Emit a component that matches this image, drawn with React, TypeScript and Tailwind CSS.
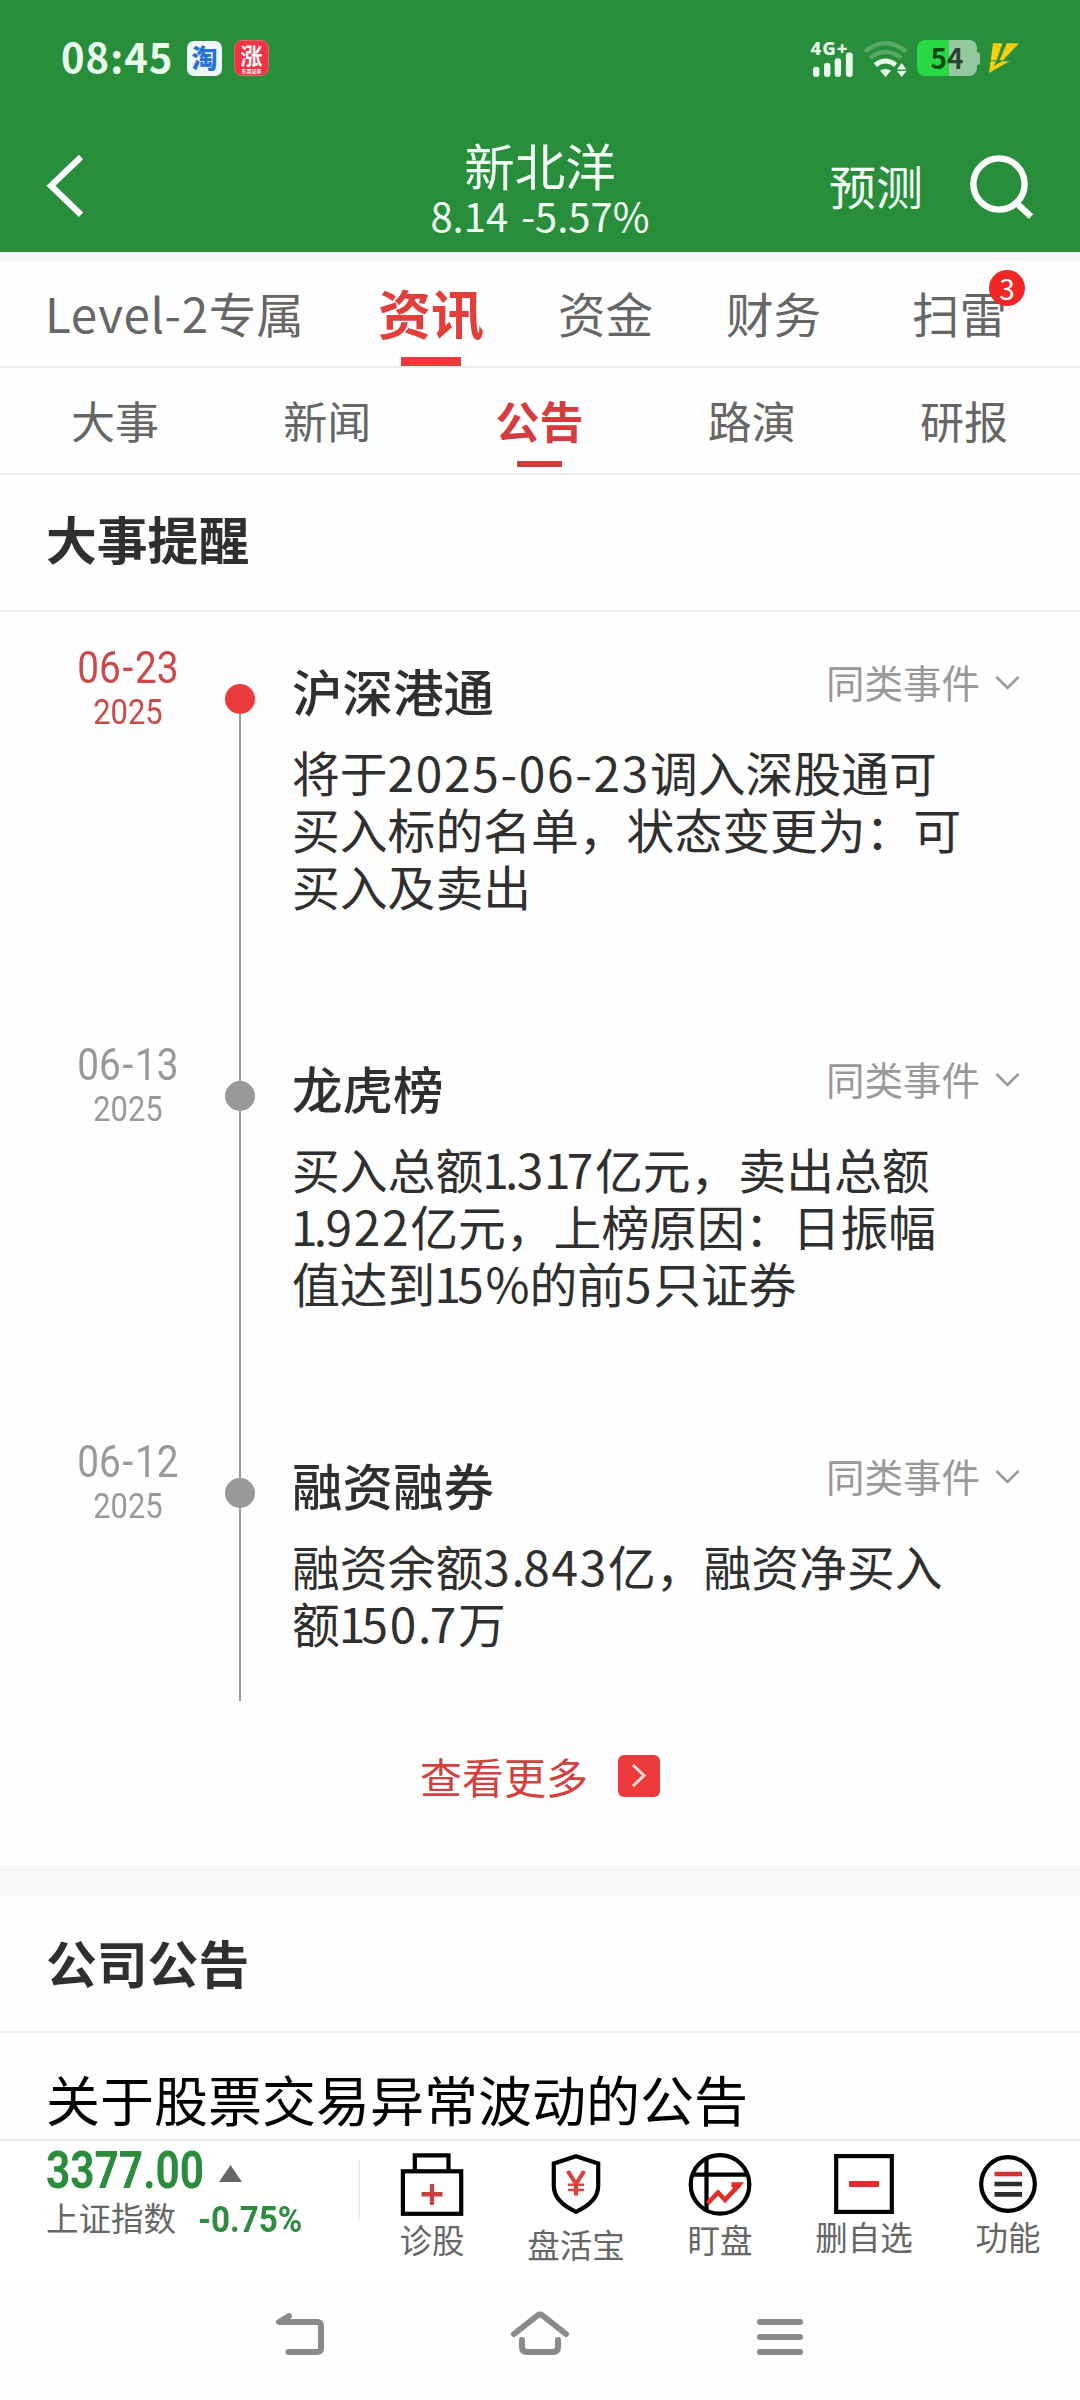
import type { ReactNode } from 'react'

type TimelineEvent = {
  date:   string
  title:  string
  lines:  string[]
  active: boolean
}

const EVENTS: TimelineEvent[] = [
  {
    date: '06-23',
    title: '沪深港通',
    lines: ['将于2025-06-23调入深股通可', '买入标的名单，状态变更为：可', '买入及卖出'],
    active: true,
  },
  {
    date: '06-13',
    title: '龙虎榜',
    lines: ['买入总额1.317亿元，卖出总额', '1.922亿元，上榜原因：日振幅', '值达到15%的前5只证券'],
    active: false,
  },
  {
    date: '06-12',
    title: '融资融券',
    lines: ['融资余额3.843亿，融资净买入', '额150.7万'],
    active: false,
  },
]

const SUB_TABS = ['大事', '新闻', '公告', '路演', '研报']

// Proportional figures: loosen round digits, pull in "1" and the decimal point
function Mixed({ text }: { text: string }) {
  return (
    <>
      {text.split(/(1|\.|[02-9-]+)/).map((part, i) => {
        if (i % 2 === 0) return part
        if (part === '1') return <span key={i} className="-ml-[1px] tracking-[-3.8px]">1</span>
        if (part === '.') return <span key={i} className="tracking-[-1.5px]">.</span>
        return <span key={i} className="tracking-[1.7px]">{part}</span>
      })}
    </>
  )
}

function StatusBar() {
  return (
    <div className="flex h-[116px] items-center pl-[61px] pr-[60px]">
      <span className="-mt-[5px] w-[126px] text-[40px] leading-[48px] font-bold tracking-[1px] text-[#e9fbea]">08:45</span>
      <span className="flex h-[35px] w-[35px] items-center justify-center rounded-[7px] bg-[#f0f7fb] text-[26px] leading-[35px] font-black text-[#2672d2]">
        <span className="-mt-[3px]">淘</span>
      </span>
      <span className="ml-[12px] flex h-[36px] w-[35px] flex-col items-center rounded-[8px] border border-[#e0656a] bg-[#f23345] text-white">
        <span className="text-[22px] leading-[27px] font-bold">涨</span>
        <span className="-mt-[1px] text-[5px] leading-[7px] font-bold">东莞证券</span>
      </span>

      <div className="ml-auto flex items-center">
        <svg width="44" height="40" viewBox="811 38 44 40">
          <text x="811.5" y="55" fontSize="18.5" fontWeight="800" fill="#e9fbea" textLength="37" className="font-['Noto_Sans']">4G+</text>
          <g fill="#e9fbea">
            <rect x="814" y="66.7" width="6.4" height="10.3" rx="3" />
            <rect x="825" y="62.7" width="6.4" height="14.3" rx="3" />
            <rect x="835.7" y="58.3" width="6.4" height="18.7" rx="3" />
            <rect x="846.9" y="52.5" width="6.8" height="24.5" rx="3" />
          </g>
        </svg>
        <svg className="ml-[9px]" width="46" height="40" viewBox="864 38 46 40" fill="none">
          <path d="M866 51.5 Q886.5 35 907 51.5" stroke="#56a966" strokeWidth="4.6" />
          <path d="M871 58 Q886.5 46 902 58" stroke="#56a966" strokeWidth="4.6" />
          <path d="M876.3 65 Q886.5 57 896.7 65" stroke="#e9fbea" strokeWidth="4.8" />
          <path d="M881 70.5 Q886.5 67.5 892 70.5 L886.5 77Z" fill="#e9fbea" />
          <path d="M898 69.5 L902.7 63 L907.5 69.5Z M898 71 H907.5 L902.7 77Z" fill="#e9fbea" />
        </svg>
        <div className="ml-[8px] flex h-[36px] w-[60px] items-center justify-center rounded-[8px] bg-linear-to-r from-[#29d845] from-[53%] to-[#94c9a0] to-[53%]">
          <span className="-mt-[2px] bg-linear-to-r from-[#004a0c] from-55% to-[#2b4031] to-55% bg-clip-text text-[28px] leading-[36px] font-bold text-transparent">54</span>
        </div>
        <span className="h-[13px] w-[3px] rounded-r-[3px] bg-[#94c9a0]" />
        <svg className="ml-[8px]" width="32" height="32" viewBox="989 42 32 32" fill="#f3cf10">
          <path d="M994 43.3 H1003.5 L997.5 60.3 H991.8Z" />
          <path d="M1007.8 43.3 H1019.8 L1004 60.3 H1000.5Z" />
          <path d="M991.5 61.3 H997 L995 66 L1003 61.3 H1010.5 L990 73Z" />
        </svg>
      </div>
    </div>
  )
}

function Header() {
  return (
    <div className="flex h-[136px] items-start justify-between">
      <div className="w-[340px] pt-[38px] pl-[44px]">
        <svg width="42" height="64" viewBox="44 154 42 64" fill="none" stroke="#fff" strokeWidth="6.2">
          <path d="M81 157 L51 185.8 L81 214.8" />
        </svg>
      </div>
      <div className="flex flex-col items-center pt-[20px] text-[#f2fff4]">
        <div className="text-[50.5px] leading-[56px]">新北洋</div>
        <div className="mt-px text-[40px] leading-[44px]">8.14<span className="pl-[4px]"> </span>-5.57%</div>
      </div>
      <div className="flex w-[340px] items-start pt-[39px] pl-[89px]">
        <span className="text-[47px] leading-[60px] text-[#f2fff4]">预测</span>
        <svg className="ml-[43px]" width="70" height="66" viewBox="966 154 70 66" fill="none" stroke="#fff" strokeWidth="6.4">
          <circle cx="999" cy="183" r="25.6" />
          <path d="M1016.5 202 L1031 215.5" />
        </svg>
      </div>
    </div>
  )
}

function MainTabs() {
  return (
    <div className="flex h-[107px] items-start border-b-2 border-[#ececec] pl-[45px] text-[47.5px] leading-[60px] text-[#666]">
      <div className="w-[259px] pt-[22px]"><span className="tracking-[0.7px]">Level-2</span>专属</div>
      <div className="w-[254px]">
        <div className="flex w-[254px] flex-col items-center">
          <span className="flex h-[96px] items-center pt-[5px] text-[53px] font-bold text-[#e23e3c]">资讯</span>
          <span className="h-[9px] w-[60px] bg-[#ea3c3b]" />
        </div>
      </div>
      <div className="w-[168px] pt-[22px]">资金</div>
      <div className="w-[186px] pt-[22px]">财务</div>
      <div className="relative pt-[22px]">
        扫雷
        <span className="absolute top-[9px] left-[77px] flex h-[36px] w-[36px] items-center justify-center rounded-full bg-[#f12626] text-[28px] leading-[36px] text-white">3</span>
      </div>
    </div>
  )
}

function SubTabs() {
  return (
    <div className="grid h-[107px] grid-cols-5 border-b-2 border-[#ececec] pr-[10px] pl-[9px] text-[44px] leading-[56px] text-[#666]">
      {SUB_TABS.map(tab => (
        <div key={tab} className="flex flex-col items-center pt-[24px]">
          {tab === '公告' ? (
            <>
              <span className="font-bold text-[#d43c3d]">{tab}</span>
              <span className="mt-[13px] h-[6px] w-[45px] bg-[#d03c3c]" />
            </>
          ) : (
            <span>{tab}</span>
          )}
        </div>
      ))}
    </div>
  )
}

function SectionTitle({ className, children }: { className: string; children: ReactNode }) {
  return (
    <div className={`flex h-[137px] items-center border-b-2 border-[#ececec] pl-[46px] text-[50.8px] font-bold text-[#2f2f2f] ${className}`}>
      {children}
    </div>
  )
}

function EventRow({ event, last }: { event: TimelineEvent; last: boolean }) {
  return (
    <div className={last ? 'flex h-[267px]' : 'flex h-[397px]'}>
      <div className={`flex w-[225px] flex-col items-center pl-[30px] font-['Roboto'] ${event.active ? 'text-[#cb4a49]' : 'text-[#999]'}`}>
        <span className="mt-[1px] scale-x-[0.86] text-[45px] leading-[54px]">
          {event.date.slice(0, 2)}
          <span className="px-[2px]">-</span>
          {event.date.slice(3)}
        </span>
        <span className="-mt-[2px] scale-x-[0.87] text-[35.5px] leading-[38px]">2025</span>
      </div>
      <div className="flex w-[30px] flex-col items-center">
        <span className={`h-[44px] w-[2px] ${event.active ? 'bg-transparent' : 'bg-[#999]'}`} />
        <span className={`h-[30px] w-[30px] shrink-0 rounded-full ${event.active ? 'bg-[#ea3c3d]' : 'bg-[#999]'}`} />
        <span className="w-[2px] flex-1 bg-[#999]" />
      </div>
      <div className="flex-1 pt-[18px] pl-[37px] text-[#2f2f2f]">
        <div className="flex h-[64px] items-start pr-[60px]">
          <span className="text-[50.5px] leading-[64px] font-medium">{event.title}</span>
          <span className="ml-auto text-[38.5px] leading-[46px] text-[#999]">同类事件</span>
          <svg className="mt-[17px] ml-[15px]" width="25" height="16" viewBox="0 0 25 16" fill="none" stroke="#999" strokeWidth="2.6">
            <path d="M1.5 2 L12.5 13 L23.5 2" />
          </svg>
        </div>
        <div className="mt-[21px] text-[47.8px] leading-[57px] whitespace-nowrap">
          {event.lines.map(line => (
            <div key={line}><Mixed text={line} /></div>
          ))}
        </div>
      </div>
    </div>
  )
}

function ToolItem({ label, className, children }: { label: string; className: string; children: ReactNode }) {
  return (
    <div className="flex w-[144px] flex-col items-center pt-[8px]">
      <svg width="68" height="68" viewBox="0 0 68 68" fill="none" stroke="#000" strokeWidth="4.2">
        {children}
      </svg>
      <span className={`text-[32.5px] leading-[36px] text-[#666] ${className}`}>{label}</span>
    </div>
  )
}

function BottomBar() {
  return (
    <div className="flex h-[137px] border-t-2 border-[#ececec] bg-white">
      <div className="w-[358px] pl-[46px]">
        <div className="flex h-[54px] items-center">
          <span className="w-[173px] origin-left scale-x-[0.83] pt-[5px] font-['Roboto'] text-[51px] leading-[54px] font-bold text-[#2b8c3e]">3377.00</span>
          <svg className="mt-[11px]" width="23" height="17" viewBox="0 0 23 17">
            <path d="M0 17 L11.5 0 L23 17Z" fill="#666" />
          </svg>
        </div>
        <div className="flex h-[44px] items-center">
          <span className="w-[152px] text-[32.5px] leading-[44px] text-[#666]">上证指数</span>
          <span className="mt-[5px] origin-left scale-x-[0.92] font-['Roboto'] text-[36px] leading-[44px] font-bold text-[#2f8a42]">-0.75%</span>
        </div>
      </div>
      <span className="mt-[19px] h-[60px] w-[2px] bg-[#ececec]" />
      <ToolItem label="诊股" className="mt-[4px]">
        <rect x="4.9" y="22.3" width="58.3" height="42.5" />
        <path d="M16.8 22 V6.3 H50.5 V22" />
        <path d="M23.5 45.3 H44.5 M34 35 V56" stroke="#c64543" strokeWidth="4.4" />
      </ToolItem>
      <ToolItem label="盘活宝" className="mt-[9px]">
        <path d="M34 7.2 L56.2 14.5 V37 Q56.2 52.5 34 62.8 Q11.8 52.5 11.8 37 V14.5Z" />
        <path d="M25.8 22 L34 35 L42.2 22 M34 34 V46.5" stroke="#dd4440" strokeWidth="4.2" />
        <path d="M26 35.8 H42 M26 41 H42" stroke="#dd4440" strokeWidth="2.6" />
      </ToolItem>
      <ToolItem label="盯盘" className="mt-[4px]">
        <circle cx="34" cy="35.4" r="29.3" />
        <path d="M20.5 10 V61 M8 25.6 H60" />
        <path d="M21.5 54.5 L32 43.5 L39 51 L53 36" stroke="#e12c2b" strokeWidth="4.6" />
        <path d="M45.5 33.2 H58 L50 43 L45.5 37.5Z" fill="#e12c2b" stroke="none" />
      </ToolItem>
      <ToolItem label="删自选" className="mt-[1px]">
        <rect x="6.2" y="7.1" width="55.6" height="55.8" />
        <path d="M19 35 H49" stroke="#e32c2b" strokeWidth="6" />
      </ToolItem>
      <ToolItem label="功能" className="mt-[1px]">
        <circle cx="34" cy="35" r="26.8" />
        <path d="M20.5 25 H48" stroke="#cf3431" strokeWidth="4.6" />
        <path d="M20.5 35 H48 M20.5 45.4 H48" stroke="#2c2c2c" strokeWidth="4.6" />
      </ToolItem>
    </div>
  )
}

function SystemNav() {
  return (
    <div className="flex h-[124px] items-start pt-[32px] pl-[274px]">
      <svg width="52" height="50" viewBox="274 2308 52 50" fill="none" stroke="#8a8a8a" strokeWidth="6" strokeLinecap="round" strokeLinejoin="round">
        <path d="M289 2316 L279 2322 H317 Q321 2322 321 2326 V2348 Q321 2352 317 2352 H288.5" />
      </svg>
      <svg className="ml-[183px]" width="62" height="50" viewBox="509 2308 62 50" fill="none" stroke="#8a8a8a" strokeWidth="6" strokeLinecap="round" strokeLinejoin="round">
        <path d="M514 2334 L537.5 2315.5 Q540 2313.8 542.5 2315.5 L566 2334" />
        <path d="M522 2340 V2347 Q522 2352 527 2352 H553 Q558 2352 558 2347 V2340" />
      </svg>
      <svg className="ml-[184px]" width="50" height="50" viewBox="755 2308 50 50" fill="none" stroke="#8a8a8a" strokeWidth="6" strokeLinecap="round">
        <path d="M760 2322 H800 M760 2337 H800 M760 2352 H800" />
      </svg>
    </div>
  )
}

export default function App() {
  return (
    <div lang="zh-CN" className="flex h-[2400px] w-[1080px] flex-col overflow-hidden bg-[#fefefe] font-['Noto_Sans_CJK_SC',sans-serif]">
      <div className="h-[252px] shrink-0 bg-[#288e3b]">
        <StatusBar />
        <Header />
      </div>
      <div className="h-[9px] shrink-0 bg-[#f7f7f7]" />
      <MainTabs />
      <SubTabs />

      <SectionTitle className="pb-[8px]">大事提醒</SectionTitle>
      <div className="pt-[28px]">
        {EVENTS.map((event, i) => (
          <EventRow key={event.date} event={event} last={i === EVENTS.length - 1} />
        ))}
      </div>
      <div className="flex h-[165px] items-center justify-center pb-[15px]">
        <span className="text-[42px] leading-[50px] text-[#d3413e]">查看更多</span>
        <span className="ml-[30px] flex h-[42px] w-[42px] items-center justify-center rounded-[6px] bg-[#ed3b3c]">
          <svg width="16" height="26" viewBox="0 0 16 26" fill="none" stroke="#fbe6df" strokeWidth="2.8">
            <path d="M2 2 L13 12.5 L2 23" />
          </svg>
        </span>
      </div>
      <div className="h-[30px] shrink-0 bg-[#f7f7f7]" />
      <SectionTitle className="pb-[3px]">公司公告</SectionTitle>
      <div className="h-[106px] shrink-0 overflow-hidden pt-[31px] pl-[46px] text-[54px] leading-[70px] text-black">关于股票交易异常波动的公告</div>
      <BottomBar />
      <SystemNav />
    </div>
  )
}
